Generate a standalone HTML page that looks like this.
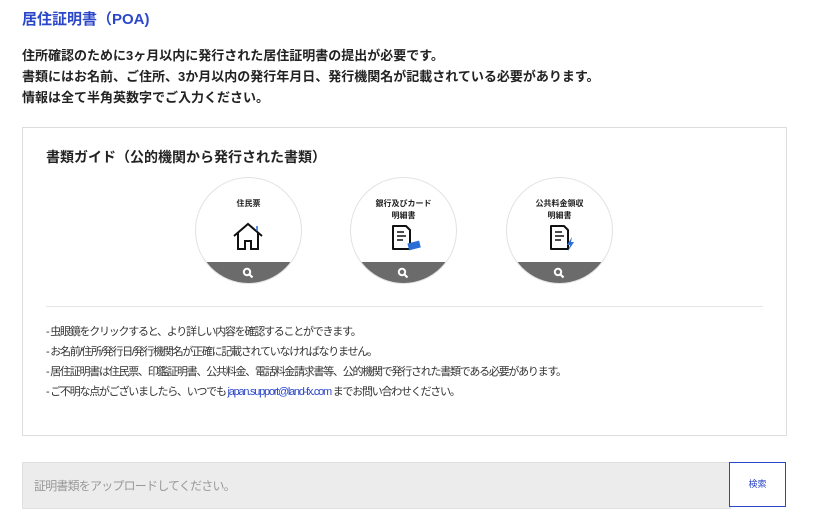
<!DOCTYPE html>
<html><head><meta charset="utf-8"><style>
body{margin:0;width:827px;height:520px;background:#fff;font-family:"Liberation Sans","Noto Sans CJK JP",sans-serif;color:#222;position:relative;overflow:hidden}
.a{position:absolute;white-space:nowrap}
.t{left:22px;top:8px;font-size:15px;font-weight:bold;color:#2b47c9}
.p{left:22px;font-size:13px;font-weight:bold;line-height:21px;top:45px}
.box{left:22px;top:127px;width:763px;height:307px;border:1px solid #ddd}
.h{left:46px;top:147px;font-size:14px;font-weight:bold}
.c{position:absolute;top:177px;width:105px;height:105px;border-radius:50%;border:1px solid #e2e2e2;overflow:hidden;background:#fff}
.c .band{position:absolute;left:0;right:0;bottom:0;height:21px;background:#6b6b6b}
.c .lb{position:absolute;top:20px;width:100%;text-align:center;font-size:8px;font-weight:bold;line-height:12px}
.c svg{position:absolute}
.hr{left:46px;top:306px;width:717px;height:1px;background:#e6e6e6}
.n{left:46px;top:322px;font-size:11px;line-height:20px;letter-spacing:-1.25px;color:#333}
.n span{color:#2b47c9}
.up{left:22px;top:462px;width:707px;height:45px;background:#ececec;border:1px solid #e0e0e0}
.up div{position:absolute;left:11px;top:14px;font-size:12px;color:#999;letter-spacing:-0.8px}
.btn{left:729px;top:462px;width:55px;height:43px;border:1px solid #2b47c9;background:#fff;font-size:9px;color:#2b47c9;text-align:center;line-height:43px}
</style></head><body>
<div class="a t">居住証明書（POA)</div>
<div class="a p">住所確認のために3ヶ月以内に発行された居住証明書の提出が必要です。<br>書類にはお名前、ご住所、3か月以内の発行年月日、発行機関名が記載されている必要があります。<br>情報は全て半角英数字でご入力ください。</div>
<div class="a box"></div>
<div class="a h">書類ガイド（公的機関から発行された書類）</div>

<div class="c" style="left:195px"><div class="lb">住民票</div>
<svg style="left:36px;top:44px" width="34" height="30" viewBox="0 0 34 30"><path d="M2 14 L16 2 L30 14 M6 11 V27 H13 V19 H19 V27 H26 V11" fill="none" stroke="#111" stroke-width="2"/><path d="M25 4 V9" stroke="#2b6fd6" stroke-width="1.5"/></svg>
<div class="band"></div><svg style="left:46px;top:89px" width="12" height="12" viewBox="0 0 12 12"><circle cx="5" cy="5" r="3.2" fill="none" stroke="#fff" stroke-width="2"/><path d="M7.5 7.5 L10.5 10.5" stroke="#fff" stroke-width="2.2"/></svg></div>

<div class="c" style="left:350px"><div class="lb">銀行及びカード<br>明細書</div>
<svg style="left:40px;top:47px" width="32" height="28" viewBox="0 0 32 28"><path d="M2 1 H15 L19 5 V24 H2 Z" fill="none" stroke="#111" stroke-width="2" stroke-linejoin="round"/><path d="M6 7 H13 M6 11 H15 M6 15 H12" stroke="#111" stroke-width="1.5"/><rect x="17" y="17" width="12" height="7" fill="#2b6fd6" transform="rotate(-14 23 20)"/></svg>
<div class="band"></div><svg style="left:46px;top:89px" width="12" height="12" viewBox="0 0 12 12"><circle cx="5" cy="5" r="3.2" fill="none" stroke="#fff" stroke-width="2"/><path d="M7.5 7.5 L10.5 10.5" stroke="#fff" stroke-width="2.2"/></svg></div>

<div class="c" style="left:506px"><div class="lb">公共料金領収<br>明細書</div>
<svg style="left:42px;top:47px" width="32" height="28" viewBox="0 0 32 28"><path d="M2 1 H15 L19 5 V24 H2 Z" fill="none" stroke="#111" stroke-width="2" stroke-linejoin="round"/><path d="M6 7 H13 M6 11 H15 M6 15 H12" stroke="#111" stroke-width="1.5"/><path d="M23 12 L18 20 H21 L19 26 L25 17 H22 Z" fill="#2b6fd6"/></svg>
<div class="band"></div><svg style="left:46px;top:89px" width="12" height="12" viewBox="0 0 12 12"><circle cx="5" cy="5" r="3.2" fill="none" stroke="#fff" stroke-width="2"/><path d="M7.5 7.5 L10.5 10.5" stroke="#fff" stroke-width="2.2"/></svg></div>

<div class="a hr"></div>
<div class="a n">- 虫眼鏡をクリックすると、より詳しい内容を確認することができます。<br>- お名前/住所/発行日/発行機関名が正確に記載されていなければなりません。<br>- 居住証明書は住民票、印鑑証明書、公共料金、電話料金請求書等、公的機関で発行された書類である必要があります。<br>- ご不明な点がございましたら、いつでも <span>japan.support@land-fx.com</span> までお問い合わせください。</div>
<div class="a up"><div>証明書類をアップロードしてください。</div></div>
<div class="a btn">検索</div>
</body></html>
